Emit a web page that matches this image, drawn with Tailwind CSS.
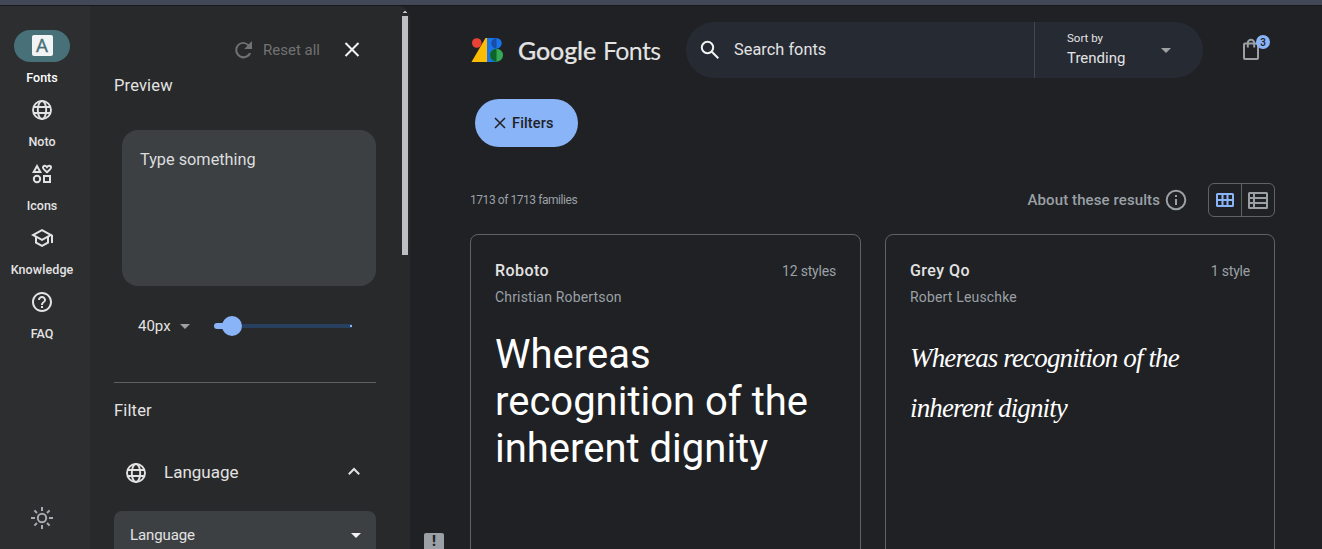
<!DOCTYPE html>
<html lang="en">
<head>
<meta charset="utf-8">
<title>Google Fonts</title>
<script src="https://cdn.jsdelivr.net/npm/@tailwindcss/browser@4"></script>
</head>
<body class="h-[549px] w-[1322px] overflow-hidden bg-[#202124] font-['Roboto',sans-serif] text-[#e3e3e3]">
<div class="h-[6px] border-b border-[#18191b] bg-[#434858]"></div>
<div class="flex h-[543px] overflow-hidden">

  <!-- navigation rail -->
  <nav class="flex w-[90px] shrink-0 flex-col items-center bg-[#2d2e30] pt-6 pr-[6px] text-[12.500px] font-medium">
    <a class="flex h-16 flex-col items-center">
      <span class="flex h-8 w-14 items-center justify-center rounded-full bg-[#487078]"><span class="mb-px flex h-[21px] w-[21px] items-center justify-center rounded-[2px] bg-[#f1f3f4] text-[19px] leading-none font-normal text-[#487078] [-webkit-text-stroke:.3px]">A</span></span>
      <span class="mt-2 leading-4 text-white">Fonts</span>
    </a>
    <a class="flex h-16 flex-col items-center">
      <span class="flex h-8 items-center"><svg class="size-6" viewBox="0 0 24 24" fill="none" stroke="#e3e3e3" stroke-width="1.9"><circle cx="12" cy="12" r="9"/><ellipse cx="12" cy="12" rx="4.2" ry="9"/><path d="M3.5 9h17M3.5 15h17"/></svg></span>
      <span class="mt-2 leading-4">Noto</span>
    </a>
    <a class="flex h-16 flex-col items-center">
      <span class="flex h-8 items-center"><svg class="size-6" viewBox="0 0 24 24" fill="none" stroke="#e3e3e3" stroke-width="2"><path d="M3.700 10 7 4l3.300 6z"/><circle cx="7" cy="17" r="3.200"/><path d="M14 14h6v6h-6z"/><path d="M17 10.200c-3-2.400-4-3.500-4-4.700 0-1 .8-1.700 1.800-1.700.9 0 1.600.5 2.200 1.300.6-.8 1.300-1.300 2.200-1.300 1 0 1.800.7 1.800 1.700 0 1.200-1 2.300-4 4.700z"/></svg></span>
      <span class="mt-2 leading-4">Icons</span>
    </a>
    <a class="flex h-16 flex-col items-center">
      <span class="flex h-8 items-center"><svg class="size-6" viewBox="0 0 24 24" fill="#e3e3e3"><path d="M12 3 1 9l4 2.180v6L12 21l7-3.820v-6l2-1.090V17h2V9L12 3zm6.820 6L12 12.720 5.180 9 12 5.280 18.820 9zM17 15.990l-5 2.730-5-2.730v-3.720L12 15l5-2.730v3.720z"/></svg></span>
      <span class="mt-2 leading-4 tracking-[.1px]">Knowledge</span>
    </a>
    <a class="flex h-16 flex-col items-center">
      <span class="flex h-8 items-center"><svg class="size-6" viewBox="0 0 24 24" fill="#e3e3e3"><path d="M11 18h2v-2h-2v2zm1-16C6.480 2 2 6.480 2 12s4.480 10 10 10 10-4.480 10-10S17.520 2 12 2zm0 18c-4.410 0-8-3.590-8-8s3.590-8 8-8 8 3.590 8 8-3.590 8-8 8zm0-14c-2.210 0-4 1.790-4 4h2c0-1.100.9-2 2-2s2 .9 2 2c0 2-3 1.750-3 5h2c0-2.250 3-2.500 3-5 0-2.210-1.790-4-4-4z"/></svg></span>
      <span class="mt-2 leading-4">FAQ</span>
    </a>
    <svg class="mt-auto mb-[19px] size-6" viewBox="0 0 24 24" fill="none" stroke="#a8abaf" stroke-width="2"><circle cx="12" cy="12" r="4.200"/><path d="M12 1v4M12 19v4M1 12h4M19 12h4M4.400 4.400l2.600 2.600M17 17l2.600 2.600M4.400 19.600 7 17M17 7l2.600-2.600"/></svg>
  </nav>

  <!-- preview and filter panel -->
  <aside class="flex w-[320px] shrink-0 rounded-tr-xl bg-[#28292a]">
    <div class="flex w-[286px] flex-col *:shrink-0 pl-6">
      <div class="mt-7 flex h-8 items-center justify-end pr-3">
        <svg class="size-6" viewBox="0 0 24 24" fill="#717273"><path d="M17.650 6.350A8.960 8.960 0 0 0 12 4a8.200 8.200 0 1 0 8.200 11h-2.300A6.200 6.200 0 1 1 12 5.800c1.800 0 3.300.7 4.400 1.900L13.200 11H21V3z"/></svg>
        <span class="ml-2 text-[15px] text-[#717273]">Reset all</span>
        <svg class="ml-5 size-6" viewBox="0 0 24 24" fill="none" stroke="#f1f3f4" stroke-width="2"><path d="m5.500 5 13 13m0-13-13 13"/></svg>
      </div>
      <h2 class="mt-2 text-[16.500px] leading-6 tracking-[.15px]">Preview</h2>
      <div class="mt-8 ml-2 h-[156px] rounded-2xl bg-[#3c4043] px-[18px] pt-[18px] text-[16.300px] leading-6 text-[#dcdddf]">Type something</div>
      <div class="mt-6 ml-6 flex h-8 items-center">
        <span class="w-[42px] text-[15px]">40px</span>
        <svg class="h-[5px] w-[10px]" viewBox="0 0 10 5"><path fill="#a0a1a3" d="M0 0h10L5 5z"/></svg>
        <div class="ml-6 flex items-center">
          <span class="h-[6px] w-3 rounded-l-full bg-[#8ab4f8]"></span>
          <span class="-ml-1 size-5 rounded-full bg-[#8ab4f8]"></span>
          <span class="flex h-1 w-[110px] items-center justify-end bg-[#27405f]"><i class="size-[2px] bg-[#8ab4f8]"></i></span>
        </div>
      </div>
      <div class="mt-10 h-px bg-[#5f6163]"></div>
      <h2 class="mt-4 text-[16.500px] leading-6 tracking-[.15px]">Filter</h2>
      <div class="mt-[38px] flex h-6 items-center pr-[10px]">
        <svg class="ml-[10px] size-6" viewBox="0 0 24 24" fill="none" stroke="#e3e3e3" stroke-width="1.900"><circle cx="12" cy="12" r="9"/><ellipse cx="12" cy="12" rx="4.200" ry="9"/><path d="M3.500 9h17M3.500 15h17"/></svg>
        <span class="ml-4 text-[17px]">Language</span>
        <svg class="ml-auto size-6" viewBox="0 0 24 24" fill="none" stroke="#e3e3e3" stroke-width="2"><path d="m6.800 13.200 5.200-5.200 5.200 5.200"/></svg>
      </div>
      <div class="mt-[26px] flex h-12 items-center justify-between rounded-t-lg bg-[#3c4043] pr-[15px] pl-4">
        <span class="text-[15px] tracking-[-.1px]">Language</span>
        <svg class="h-[5px] w-[10px]" viewBox="0 0 10 5"><path fill="#f1f3f4" d="M0 0h10L5 5z"/></svg>
      </div>
    </div>
    <div class="ml-auto flex w-2 flex-col pt-[5px] pr-[2px]">
      <svg class="h-[2px] w-[6px]" viewBox="0 0 6 2"><path fill="#bdbfc6" d="M2 0h2v1h1v1H1V1h1z"/></svg>
      <div class="mt-[3px] h-[239px] bg-[#bdbfc6]"></div>
    </div>
  </aside>

  <!-- results -->
  <main class="relative flex w-[912px] flex-col pr-[47px] pl-[60px]">
    <header class="mt-4 -mr-1 flex h-14 shrink-0 items-center">
      <svg class="ml-px h-[26px] w-8" viewBox="0 0 32 26">
        <path fill="#fbbc04" d="M16 1v24H.5L14.500 1z"/><circle cx="5.800" cy="6" r="4.800" fill="#ea4335"/>
        <path fill="#1a73e8" d="M16 1h10v24H16z"/><path fill="#1a73e8" d="M25.500 1a5.200 5.200 0 0 1 0 10.400z"/>
        <path fill="#174ea6" d="M25.500 1a5.200 5.200 0 0 0 0 10.400z"/><circle cx="25.500" cy="18.200" r="6.500" fill="#34a853"/><path fill="#0d652d" d="M25.500 11.700a6.500 6.500 0 0 0 0 13z"/>
      </svg>
      <div class="ml-[15px] flex w-[168px] gap-[5px] font-['Lato',sans-serif] text-[25px] leading-8"><span class="w-[80px] font-medium tracking-[-.1px] [-webkit-text-stroke:.2px]">Google</span><span class="tracking-[-.7px]">Fonts</span></div>
      <div class="flex h-14 w-[517px] shrink-0 items-center rounded-full bg-[#262a33]">
        <svg class="ml-3 size-6" viewBox="0 0 24 24" fill="none" stroke="#f1f3f4" stroke-width="2"><circle cx="9.500" cy="9.500" r="5.700"/><path d="m13.800 13.800 6.500 6.500"/></svg>
        <span class="ml-3 w-[300px] text-[16.300px] tracking-[.05px]">Search fonts</span>
        <div class="flex h-full flex-1 items-center border-l border-[#45484f] pl-8">
          <div class="w-[94px] pb-[2px]"><div class="text-[11.500px] leading-4">Sort by</div><div class="mt-[2px] text-[15px] leading-5">Trending</div></div>
          <svg class="h-[5px] w-[10px]" viewBox="0 0 10 5"><path fill="#a0a1a3" d="M0 0h10L5 5z"/></svg>
        </div>
      </div>
      <div class="relative ml-9 size-6 shrink-0">
        <svg class="size-6" viewBox="0 0 24 24" fill="none" stroke="#9aa0a6" stroke-width="2"><rect x="5" y="5.500" width="14" height="15.500" rx="1"/><path d="M8.800 9.500V5a3.200 3.200 0 0 1 6.400 0v4.500"/></svg>
        <span class="absolute -top-[3px] left-[17px] flex size-[14px] items-center justify-center rounded-full bg-[#8ab4f8] text-[10px] font-medium text-[#202124]">3</span>
      </div>
    </header>
    <button class="mt-[21px] ml-[5px] flex h-12 w-[103px] shrink-0 items-center rounded-full bg-[#8ab4f8] pl-[19px] text-[14.500px] font-medium text-[#202124]">
      <svg class="mr-[6px] size-3" viewBox="0 0 12 12" fill="none" stroke="#202124" stroke-width="1.500"><path d="m1 1 10 10M11 1 1 11"/></svg><span class="pt-px tracking-[.15px]">Filters</span>
    </button>
    <div class="mt-9 flex h-[34px] shrink-0 items-center text-[#9aa0a6]">
      <span class="text-[12px] tracking-[-.44px]">1713 of 1713 families</span>
      <span class="ml-auto text-[15px] font-medium tracking-[.1px]">About these results</span>
      <svg class="ml-1 size-6" viewBox="0 0 24 24" fill="none" stroke="#9aa0a6" stroke-width="2"><circle cx="12" cy="12" r="9.300"/><path d="M12 11v6M12 7v2"/></svg>
      <div class="ml-5 flex h-[34px] w-[67px] rounded-md border border-[#5f6368]">
        <span class="flex w-[33px] items-center justify-center border-r border-[#5f6368]"><svg class="h-[14px] w-[18px]" viewBox="0 0 18 14" fill="none" stroke="#8ab4f8" stroke-width="2"><rect x="1" y="1" width="16" height="12" rx=".5"/><path d="M6.500 1v12M11.500 1v12M1 7h16"/></svg></span>
        <span class="flex flex-1 items-center justify-center"><svg class="h-[17px] w-5" viewBox="0 0 20 17" fill="none" stroke="#9aa0a6" stroke-width="2"><rect x="1" y="1" width="18" height="15" rx=".5"/><path d="M6 1v15M1 6h18M1 11h18"/></svg></span>
      </div>
    </div>
    <div class="mt-[17px] grid h-[400px] shrink-0 grid-cols-[391px_390px] gap-6">
      <article class="rounded-lg border border-[#5f6368] px-6 pt-6">
        <div class="flex justify-between leading-6"><h3 class="text-[16px] font-medium tracking-[.45px]">Roboto</h3><span class="text-[14px] tracking-[-.2px] text-[#9aa0a6]">12 styles</span></div>
        <p class="mt-1 text-[14px] leading-5 tracking-[.17px] text-[#9aa0a6]">Christian Robertson</p>
        <p class="mt-6 text-[40px] leading-[47px] text-white">Whereas<br>recognition of the<br>inherent dignity</p>
      </article>
      <article class="rounded-lg border border-[#5f6368] px-6 pt-6">
        <div class="flex justify-between leading-6"><h3 class="text-[16px] font-medium tracking-[.45px]">Grey Qo</h3><span class="text-[14px] tracking-[-.2px] text-[#9aa0a6]">1 style</span></div>
        <p class="mt-1 text-[14px] leading-5 tracking-[.17px] text-[#9aa0a6]">Robert Leuschke</p>
        <p class="mt-[26px] font-['Liberation_Serif',serif] text-[27px] leading-[50px] tracking-[-.86px] text-white italic">Whereas recognition of the<br>inherent dignity</p>
      </article>
    </div>
    <div class="absolute bottom-0 left-[14px] flex h-4 w-5 items-center justify-center rounded-t-[2px] bg-[#9aa0a6] text-[14px] font-black text-[#202124]">!</div>
  </main>
</div>
</body>
</html>
